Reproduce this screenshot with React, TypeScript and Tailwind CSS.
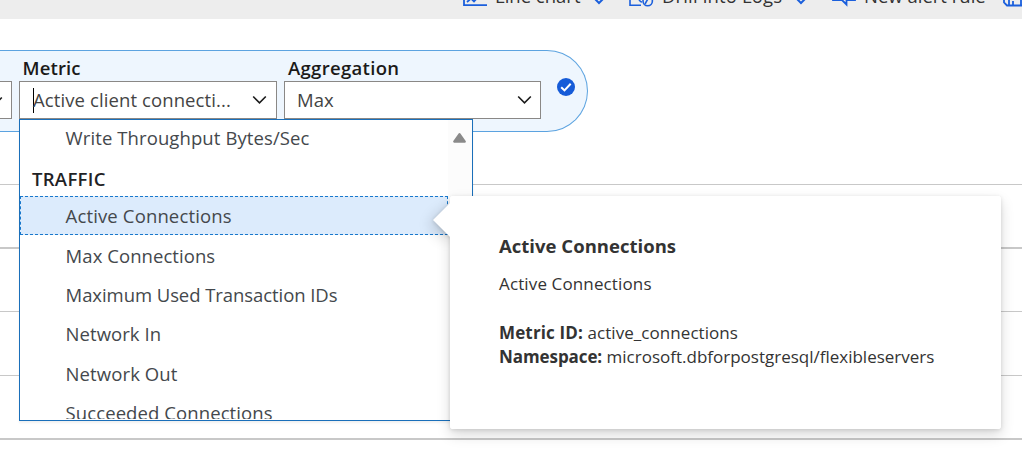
import React from "react";

const metrics = [
  { name: "Active Connections", style: "border border-dashed border-[#1878cc] bg-[#dcebfc] pl-[44.6px] tracking-[0.14px]" },
  { name: "Max Connections", style: "pt-px pl-[45.6px] tracking-[0.06px]" },
  { name: "Maximum Used Transaction IDs", style: "pt-px pl-[45.6px] tracking-[-0.07px]" },
  { name: "Network In", style: "pl-[45.6px] tracking-[0.05px]" },
  { name: "Network Out", style: "pt-px pl-[45.6px] tracking-[0.1px]" },
  { name: "Succeeded Connections", style: "pt-px pl-[45.6px] tracking-[0.09px]" },
];

function Chevron({ className }: { className?: string }) {
  return (
    <svg className={className} width="15" height="10" viewBox="0 0 15 10" fill="none" stroke="#1b1b1b" strokeWidth="1.6">
      <path d="M1.2 1.5 7.5 7.8 13.8 1.5" />
    </svg>
  );
}

function ToolbarChevron() {
  return (
    <svg className="mt-[5px] shrink-0" width="12" height="12" viewBox="0 0 12 12" fill="none" stroke="#1b5fdc" strokeWidth="2">
      <path d="M1 5 6 10 11 5" />
    </svg>
  );
}

function Toolbar() {
  return (
    <header className="h-[19px] overflow-hidden bg-[#ededed]">
      <div className="-mt-6 flex h-10 items-center pl-[463px] text-[18.5px] whitespace-nowrap text-[#333]">
        <svg className="shrink-0" width="24" height="22" viewBox="0 0 24 22" fill="none" stroke="#1b5fdc" strokeWidth="1.8">
          <path d="M1 0V20.2H24M4 17 8 13.5 11 16.5 22 4" />
        </svg>
        <span className="ml-[8px] w-[98px] shrink-0">Line chart</span>
        <ToolbarChevron />
        <svg className="ml-[24px] shrink-0" width="25" height="22" viewBox="0 0 25 22" fill="none" stroke="#1b5fdc" strokeWidth="1.6">
          <path d="M12 20.2H1V1H17V8" />
          <path d="M10 11.5C9 14 11 17 13 17" />
          <circle cx="18.7" cy="16" r="4.7" />
          <path d="M16 19 20 12" />
        </svg>
        <span className="ml-[8px] w-[133px] shrink-0 tracking-[0.15px]">Drill into Logs</span>
        <ToolbarChevron />
        <svg className="ml-[25px] shrink-0" width="25" height="22" viewBox="0 0 25 22" fill="none" stroke="#1b5fdc" strokeWidth="1.8">
          <path d="M1 15H10L14.5 19.5V15H23V2H1Z" />
        </svg>
        <span className="ml-[7px] w-[139px] shrink-0">New alert rule</span>
        <svg className="shrink-0" width="24" height="22" viewBox="0 0 24 22" fill="none" stroke="#1b5fdc" strokeWidth="1.8">
          <path d="M1 1H23V20.5H4L1 17.5Z" />
          <path d="M6 20V13H18V20M10 20V16" />
        </svg>
      </div>
    </header>
  );
}

function GridLines() {
  return (
    <div>
      <div className="h-[185px] border-b border-[#c8c8c8]" />
      <div className="h-[64px] border-b-2 border-[#c8c8c8]" />
      <div className="h-[63px] border-b border-[#c8c8c8]" />
      <div className="h-[64px] border-b border-[#c8c8c8]" />
      <div className="h-[64px] border-b-2 border-[#c8c8c8]" />
    </div>
  );
}

function MetricPicker() {
  return (
    <section className="flex h-[82px] w-[588px] rounded-r-[41px] border border-l-0 border-[#5ca3e0] bg-[#eef6fe]">
      <div className="mt-[30px] h-[38px] w-[12px] overflow-hidden border border-l-0 border-[#8a8886] bg-white">
        <Chevron className="-ml-[12px] mt-[14px]" />
      </div>
      <div className="ml-[7px] w-[258px]">
        <div className="h-[30px] pl-[3.6px] text-[18.5px] leading-[34px] font-semibold tracking-[0.1px] text-[#1b1a19]">Metric</div>
        <div className="flex h-[38px] items-center border border-[#8a8886] bg-white pr-[9px]">
          <span className="ml-[13px] h-[25px] w-px bg-black" />
          <span className="-ml-px flex-1 text-[18.5px] whitespace-nowrap text-[#444] tracking-[0.1px]">Active client connecti...</span>
          <Chevron />
        </div>
      </div>
      <div className="ml-[7px] w-[257px]">
        <div className="h-[30px] pl-[4px] text-[18.5px] leading-[34px] font-semibold tracking-[0.32px] text-[#1b1a19]">Aggregation</div>
        <div className="flex h-[38px] items-center border border-[#8a8886] bg-white pr-[8px] pl-[12px]">
          <span className="flex-1 text-[18.5px] text-[#444]">Max</span>
          <Chevron />
        </div>
      </div>
      <svg className="mt-[27px] ml-[16px]" width="18" height="18" viewBox="0 0 18 18">
        <circle cx="9" cy="9" r="9" fill="#155bd8" />
        <path d="M4.2 9.2 7.5 12.4 13.7 5.8" fill="none" stroke="#fff" strokeWidth="2" />
      </svg>
    </section>
  );
}

function MetricList() {
  return (
    <div className="flex h-[302px] w-[454px] overflow-hidden border border-[#1a6fba] bg-white text-[18.5px] whitespace-nowrap text-[#44484c] shadow-[0_2px_2px_rgba(0,0,0,0.06)]">
      <div className="flex h-[299px] w-[428px] flex-col overflow-hidden">
        <div className="h-[37px] shrink-0 pl-[45.6px] leading-[35px] tracking-[0.1px]">Write Throughput Bytes/Sec</div>
        <div className="h-[39px] shrink-0 pl-[12px] text-[18.5px] leading-[43px] font-semibold tracking-[0.3px] text-[#1f2225]">TRAFFIC</div>
        {metrics.map((m) => (
          <div key={m.name} className={`flex h-[39.33px] shrink-0 items-center ${m.style}`}>
            {m.name}
          </div>
        ))}
      </div>
      <div className="flex-1 bg-[#fcfcfc] pt-[12px] pl-[4px]">
        <svg width="15" height="11" viewBox="0 0 15 11">
          <path d="M7.5 2.2 12.8 9.6H2.2Z" fill="#8a8a8a" stroke="#8a8a8a" strokeWidth="2.2" strokeLinejoin="round" />
        </svg>
      </div>
    </div>
  );
}

function MetricCard() {
  return (
    <aside className="relative h-[233px] w-[551px] rounded-[3px] bg-white pt-[37px] pl-[49px] text-[17px] leading-[24px] whitespace-nowrap text-[#333] shadow-[0_6px_14px_rgba(0,0,0,0.15),0_1px_4px_rgba(0,0,0,0.12)]">
      <div className="absolute top-[12px] left-[-12px] h-[24px] w-[24px] rotate-45 bg-white shadow-[0_6px_14px_rgba(0,0,0,0.15),0_1px_4px_rgba(0,0,0,0.12)]" />
      <div className="absolute inset-0 rounded-[3px] bg-white" />
      <div className="relative">
        <h2 className="text-[18.5px] leading-[26px] font-bold tracking-[0.02px]">Active Connections</h2>
        <p className="mt-[13px] tracking-[0.13px]">Active Connections</p>
        <p className="mt-[25px]">
          <b className="font-bold tracking-[0.15px]">Metric ID:</b> <span className="tracking-[0.06px]">active_connections</span>
        </p>
        <p>
          <b className="font-bold tracking-[-0.08px]">Namespace:</b> microsoft.dbforpostgresql/flexibleservers
        </p>
      </div>
    </aside>
  );
}

export default function App() {
  return (
    <main className="relative h-[465px] w-[1022px] overflow-hidden bg-white font-['Open_Sans','Noto_Sans',sans-serif]">
      <div className="absolute inset-0">
        <GridLines />
      </div>
      <div className="relative">
        <Toolbar />
        <div className="pt-[31px]">
          <MetricPicker />
        </div>
      </div>
      <div className="absolute top-[119px] left-[19px]">
        <MetricList />
      </div>
      <div className="absolute top-[196px] left-[450px]">
        <MetricCard />
      </div>
    </main>
  );
}
